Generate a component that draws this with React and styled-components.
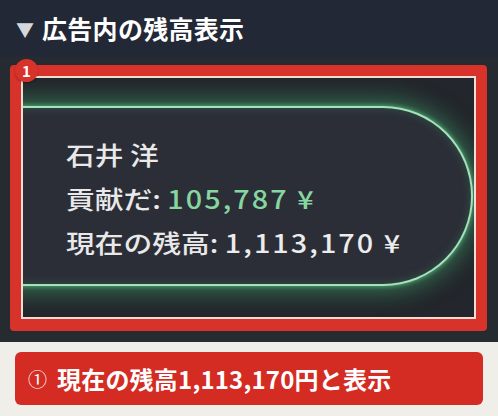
import React from "react";
import styled, { createGlobalStyle } from "styled-components";

const Global = createGlobalStyle`
  html, body { margin: 0; padding: 0; background: #f0eee9; }
  body { font-family: "Noto Sans CJK JP", "Noto Sans", sans-serif; }
  #root { width: 498px; height: 416px; overflow: hidden; }
`;

const Page = styled.div`
  width: 498px;
  height: 416px;
  display: flex;
  flex-direction: column;
`;

const Header = styled.div`
  height: 57px;
  background: #222835;
  display: flex;
  align-items: center;
  padding-left: 16px;
  gap: 8px;
  box-sizing: border-box;
`;

const Caret = styled.span`
  color: #d4d7dc;
  font-size: 18px;
  line-height: 1;
  margin-top: 1px;
`;

const Title = styled.h2`
  margin: 0;
  color: #ffffff;
  font-size: 25px;
  font-weight: 700;
  line-height: 1;
  letter-spacing: 0.3px;
`;

const ShotSection = styled.div`
  background: #262a31;
  padding: 8px 11px 11px 10px;
  height: 285px;
  box-sizing: border-box;
`;

const Frame = styled.div`
  position: relative;
  border: 11px solid #d8332a;
  border-bottom-width: 12px;
  border-radius: 4px;
  box-sizing: border-box;
  height: 266px;
`;

const Screen = styled.div`
  height: 100%;
  border: 2px solid #f1ddd3;
  box-sizing: border-box;
  background: #23262c;
  overflow: hidden;
  padding-top: 28px;
`;

const Pill = styled.div`
  margin-left: -60px;
  margin-right: 1px;
  height: 180px;
  box-sizing: border-box;
  border: 2px solid #a3e2bb;
  border-left: none;
  border-radius: 0 92px 92px 0;
  background: #2b2e37;
  box-shadow: 0 0 22px 7px rgba(60, 150, 98, 0.6), 0 0 4px 1px rgba(120, 210, 155, 0.7),
    inset 0 0 8px 1px rgba(64, 150, 100, 0.3);
  padding: 24px 0 0 103px;
`;

const Info = styled.div`
  color: #e9e9e9;
  font-size: 25px;
  font-weight: 500;
  line-height: 44px;
  transform: scaleX(1.15);
  transform-origin: left center;
  white-space: nowrap;
`;

const Line = styled.div``;

const Amount = styled.span`
  color: ${(p) => (p.$green ? "#86d6a0" : "#ececec")};
  letter-spacing: 1.8px;
`;

const Badge = styled.div`
  position: absolute;
  left: -6px;
  top: -17px;
  width: 23px;
  height: 23px;
  border-radius: 50%;
  background: #d8332a;
  color: #fff;
  font-size: 15px;
  font-weight: 700;
  display: flex;
  align-items: center;
  justify-content: center;
  line-height: 1;
  box-shadow: 0 1px 2px rgba(0, 0, 0, 0.3);
`;

const Footer = styled.div`
  flex: 1;
  background: #f0eee9;
  padding: 10px 15px 0 15px;
`;

const Callout = styled.div`
  height: 53px;
  background: #d42b23;
  border-radius: 6px;
  display: flex;
  align-items: center;
  padding-left: 13px;
  gap: 10px;
  color: #fff;
`;

const Num = styled.span`
  font-size: 19px;
  font-weight: 400;
  line-height: 1;
`;

const CalloutText = styled.span`
  font-size: 24px;
  font-weight: 700;
  line-height: 1;
  letter-spacing: 0.2px;
`;

export default function App() {
  return (
    <Page>
      <Global />
      <Header>
        <Caret>▼</Caret>
        <Title>広告内の残高表示</Title>
      </Header>
      <ShotSection>
        <Frame>
          <Badge>1</Badge>
          <Screen>
            <Pill>
              <Info>
                <Line>石井 洋</Line>
                <Line>
                  貢献だ: <Amount $green>105,787 ¥</Amount>
                </Line>
                <Line>
                  現在の残高: <Amount>1,113,170 ¥</Amount>
                </Line>
              </Info>
            </Pill>
          </Screen>
        </Frame>
      </ShotSection>
      <Footer>
        <Callout>
          <Num>①</Num>
          <CalloutText>現在の残高1,113,170円と表示</CalloutText>
        </Callout>
      </Footer>
    </Page>
  );
}
